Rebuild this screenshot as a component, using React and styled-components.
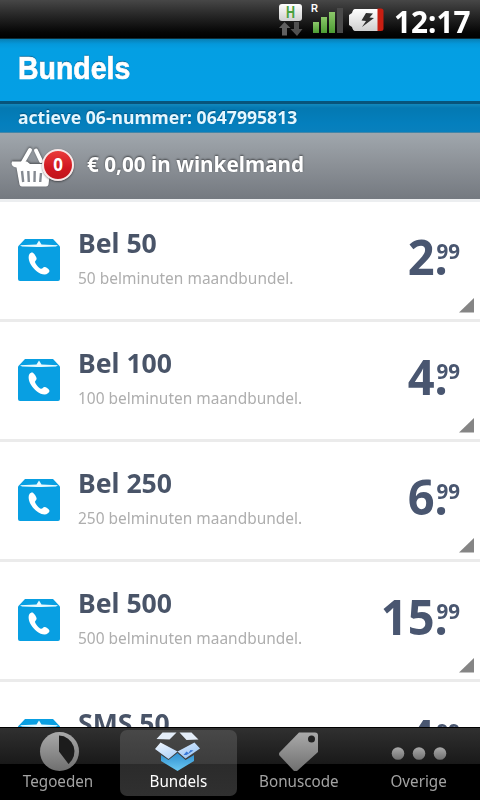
import React from "react";
import styled, { createGlobalStyle } from "styled-components";

const Global = createGlobalStyle`
  * { box-sizing: border-box; }
  body { margin: 0; background: #fff; overflow: hidden; }
`;

const Screen = styled.div`
  width: 480px;
  height: 800px;
  display: flex;
  flex-direction: column;
  overflow: hidden;
  background: #fff;
  font-family: "Noto Sans", sans-serif;
`;

const Label = styled.span`
  display: block;
  flex: none;
  white-space: pre;
  width: max-content;
  transform: scaleX(${(p) => p.$fit || 1});
  transform-origin: ${(p) => p.$origin || "left"} center;
`;

const StatusBar = styled.div`
  height: 39px;
  flex: none;
  display: flex;
  justify-content: flex-end;
  background: linear-gradient(#474747, #2b2b2b 35%, #050505 85%, #000);
  border-bottom: 1px solid #0c2c38;
`;

const StatusIcons = styled.svg`
  width: 110px;
  height: 38px;
  flex: none;
  margin-right: 9px;
`;

const Clock = styled.div`
  width: 86px;
  font-size: 31px;
  font-weight: 700;
  line-height: 42px;
  color: #fff;
`;

const Header = styled.div`
  height: 65px;
  flex: none;
  padding: 9px 18px 0;
  background: linear-gradient(#087fb4, #0498db 5px, #049fe3 10px, #049fe5);
  border-bottom: 3px solid #07557c;
  font-family: "Liberation Sans", sans-serif;
  font-size: 32px;
  font-weight: 700;
  line-height: 40px;
  color: #fff;
  -webkit-text-stroke: 0.7px #fff;
  text-shadow: 0 -1px 1px rgba(0, 40, 70, 0.6);
`;

const NumberBar = styled.div`
  height: 29px;
  flex: none;
  padding: 1px 18px 0;
  background: linear-gradient(#1289bd, #0479b2 4px, #047fbd 70%, #0880bd);
  border-bottom: 1px solid #4386a8;
  font-size: 17px;
  font-weight: 700;
  line-height: 25px;
  color: #e4f7ff;
  text-shadow: 0 -1px 1px rgba(0, 40, 70, 0.5);
`;

const CartBar = styled.div`
  height: 66px;
  flex: none;
  display: flex;
  padding-left: 10px;
  background: linear-gradient(#a0a7ad, #8d9298 45%, #747980);
`;

const CartIcon = styled.div`
  position: relative;
  width: 77px;
  flex: none;
`;

const Basket = styled.svg`
  display: block;
  width: 66px;
  height: 66px;
`;

const Badge = styled.span`
  position: absolute;
  left: 32px;
  top: 16px;
  width: 32px;
  height: 32px;
  border: 2.5px solid #f7e9e9;
  border-radius: 50%;
  background: linear-gradient(#ea3b3b, #d01820 60%, #c0141c);
  color: #fff;
  font-size: 17px;
  font-weight: 700;
  line-height: 28px;
  text-align: center;
  box-shadow: 0 1px 2px rgba(0, 0, 0, 0.45);
`;

const CartText = styled.div`
  padding-top: 17px;
  font-size: 21px;
  font-weight: 700;
  line-height: 28px;
  color: #fff;
  text-shadow: 0 -1px 2px rgba(0, 0, 0, 0.55);
`;

const List = styled.div`
  flex: 1;
  min-height: 0;
  overflow: hidden;
  border-top: 3px solid #eceef0;
`;

const Row = styled.div`
  height: 120px;
  display: flex;
  padding-left: 18px;
  border-bottom: 3px solid #ebebeb;
`;

const BoxIcon = styled.svg`
  width: 42px;
  height: 42px;
  flex: none;
  margin-top: 37px;
`;

const Info = styled.div`
  flex: 1;
  padding: 21px 0 0 18px;
`;

const Name = styled.div`
  font-size: 27px;
  font-weight: 700;
  line-height: 40px;
  color: #495468;
`;

const Desc = styled.div`
  font-size: 16px;
  line-height: 26px;
  margin-top: 2px;
  color: #aeaeae;
`;

const Side = styled.div`
  width: 130px;
  flex: none;
  display: flex;
  flex-direction: column;
  align-items: flex-end;
`;

const Price = styled.div`
  display: flex;
  justify-content: flex-end;
  height: 96px;
  padding: 24px 20px 0 0;
  color: #495670;
  font-weight: 700;
`;

const Whole = styled.div`
  font-size: 49px;
  line-height: 60px;
`;

const Cents = styled.div`
  margin: 10px 0 0 -12px;
  font-size: 21px;
  line-height: 30px;
`;

const Corner = styled.svg`
  width: 16px;
  height: 15px;
  margin-right: 5px;
`;

const TabBar = styled.div`
  height: 73px;
  flex: none;
  display: flex;
  padding-top: 3px;
  background: linear-gradient(#000 1px, #303030 1px, #191919 37px, #000 37px);
`;

const Tab = styled.div`
  width: 117px;
  height: 66px;
  flex: none;
  margin-right: 3px;
  display: flex;
  flex-direction: column;
  align-items: center;
  border-radius: 7px;
  background: ${(p) => (p.$active ? "linear-gradient(#484848, #3c3c3c 34px, #2b2b2b 34px, #303030)" : "none")};
  color: ${(p) => (p.$active ? "#fff" : "#a3a3a3")};
  font-size: 16px;
  line-height: 22px;
`;

const TabIcon = styled.svg`
  width: 60px;
  height: 41px;
  flex: none;
  margin-bottom: -1px;
`;

const rows = [
  { name: "Bel 50", desc: "50 belminuten maandbundel.", whole: "2." },
  { name: "Bel 100", desc: "100 belminuten maandbundel.", whole: "4." },
  { name: "Bel 250", desc: "250 belminuten maandbundel.", whole: "6." },
  { name: "Bel 500", desc: "500 belminuten maandbundel.", whole: "15." },
  { name: "SMS 50", desc: "50 sms maandbundel.", whole: "4.", sms: true },
];

function PackageIcon({ sms }) {
  return (
    <BoxIcon viewBox="0 0 42 42">
      <path d="M7 0H35L42 7.500V40Q42 42 40 42H2Q0 42 0 40V7.500Z" fill="#089fe2" />
      <path d="M2 6.200L18.500 5.500L21 1.500L23.500 5.500L40 6.200L38 7.400L23 8H19L4 7.400Z" fill="#e9faff" />
      {!sms && (
        <path
          d="M11.500 15C10 17 10.500 21.500 12.800 25.500C16 31 21.500 35.300 26.500 35.500C29 35.500 31.300 33.500 31.500 32C31.500 30.500 28.300 28 26.500 28C25 28.200 24.500 30 23 29.800C20.800 29 17.700 25.500 17 23C16.800 21.800 18.700 21.200 18.600 19.500C18.500 18 16 14 14.400 13.600C13.300 13.500 12.200 14.200 11.500 15Z"
          fill="#fff"
        />
      )}
    </BoxIcon>
  );
}

function BasketIcon() {
  return (
    <Basket viewBox="10 133 66 66">
      <g style={{ filter: "drop-shadow(0 -1px 1px rgba(0,0,0,.45))" }}>
        <path d="M22 164L30 150M36 150.500L41 161" stroke="#fff" strokeWidth="4" strokeLinecap="round" />
        <path d="M12 161.500H27L30 164H51L48.500 184.500Q48 186.500 46 186.500H22Q20 186.500 19.500 184.500L16.500 167.500Q12 167 11.500 163.500Z" fill="#fff" />
      </g>
      <path d="M22 171L23.200 182M28.300 171L28.800 182M34.700 171L34.500 182M41 173L40.200 182" stroke="#858a91" strokeWidth="2.400" />
    </Basket>
  );
}

function StatusGlyphs() {
  return (
    <StatusIcons viewBox="275 0 110 38">
      <defs>
        <linearGradient id="sig" x2="0" y2="1">
          <stop stopColor="#8cc86a" />
          <stop offset="1" stopColor="#4c9c33" />
        </linearGradient>
        <linearGradient id="bat" x2="0" y2="1">
          <stop stopColor="#fff" />
          <stop offset="1" stopColor="#cfcfcf" />
        </linearGradient>
      </defs>
      <rect x="279" y="4" width="23" height="17" rx="3" fill="url(#bat)" />
      <text x="290.5" y="18" textAnchor="middle" fontSize="16" fontWeight="700" fontFamily="Liberation Sans" fill="#49a03c" textLength="9" lengthAdjust="spacingAndGlyphs">H</text>
      <path d="M284.5 22L290.5 28H287V35.5H282V28H279Z" fill="#606060" />
      <path d="M294 22H299V29H302.5L297 36L290.5 29H294Z" fill="#505050" />
      <text x="311" y="12" fontSize="11" fontWeight="700" fontFamily="Liberation Sans" fill="#fff" textLength="7" lengthAdjust="spacingAndGlyphs">R</text>
      <rect x="313" y="22" width="6" height="11" fill="url(#sig)" />
      <rect x="321" y="17" width="6" height="16" fill="url(#sig)" />
      <rect x="329" y="12" width="6" height="21" fill="url(#sig)" />
      <rect x="337" y="8" width="6" height="25" fill="#4a4a4a" />
      <path d="M355 9H379V31H355Q353 31 352 27L349 25V15L352 13Q353 9 355 9Z" fill="url(#bat)" />
      <path d="M377.5 8.500H381Q383.500 8.500 383.500 11V28.500Q383.500 31 381 31H377.500Z" fill="#c81e12" />
      <path d="M366 13L373 13.500L369.500 17.500L374 18L362 27L366 21L361.500 20.500Z" fill="#303030" />
    </StatusIcons>
  );
}

const Gray = ({ id }) => (
  <linearGradient id={id} x2="0" y2="1">
    <stop stopColor="#aaa" />
    <stop offset="1" stopColor="#6f6f6f" />
  </linearGradient>
);

function App() {
  return (
    <>
      <Global />
      <Screen>
        <StatusBar>
          <StatusGlyphs />
          <Clock><Label $fit={0.96}>12:17</Label></Clock>
        </StatusBar>
        <Header><Label $fit={0.89}>Bundels</Label></Header>
        <NumberBar><Label $fit={1.035}>actieve 06-nummer: 0647995813</Label></NumberBar>
        <CartBar>
          <CartIcon>
            <BasketIcon />
            <Badge>0</Badge>
          </CartIcon>
          <CartText><Label $fit={0.987}>€ 0,00 in winkelmand</Label></CartText>
        </CartBar>
        <List>
          {rows.map((r) => (
            <Row key={r.name}>
              <PackageIcon sms={r.sms} />
              <Info>
                <Name><Label $fit={0.985}>{r.name}</Label></Name>
                <Desc><Label $fit={0.967}>{r.desc}</Label></Desc>
              </Info>
              <Side>
                <Price>
                  <Whole><Label $fit={0.96} $origin="right">{r.whole}</Label></Whole>
                  <Cents><Label $fit={0.98} $origin="right">99</Label></Cents>
                </Price>
                <Corner viewBox="0 0 16 15"><path d="M15 0V14.500H0Z" fill="#858585" /></Corner>
              </Side>
            </Row>
          ))}
        </List>
        <TabBar>
          <Tab>
            <TabIcon viewBox="29.5 730 60 41">
              <defs><Gray id="g1" /></defs>
              <circle cx="60" cy="751.500" r="19.500" fill="url(#g1)" />
              <path d="M59.500 735.500A16 16 0 0 1 69 764L59.500 751.500Z" fill="#1c1c1c" />
            </TabIcon>
            <Label $fit={0.95} $origin="center">Tegoeden</Label>
          </Tab>
          <Tab $active>
            <TabIcon viewBox="148.5 730 60 41">
              <defs>
                <linearGradient id="b1" x2="1" y2="1">
                  <stop stopColor="#f2f7ff" />
                  <stop offset="1" stopColor="#8fc0f4" />
                </linearGradient>
                <linearGradient id="b2" x2="0" y2="1">
                  <stop stopColor="#2e8fd0" />
                  <stop offset="1" stopColor="#6cc8f2" />
                </linearGradient>
              </defs>
              <path d="M160.500 755L168 760L177 753L185 760L193.500 755V761L177 771L160.500 761Z" fill="url(#b2)" />
              <path d="M162 732.500H176L169 739.500L156 739ZM179 732.500H191L198 739.500L186 740Z" fill="#e4edf8" />
              <path d="M160 742.500L177 751.500L168 759L154.500 749ZM194 742.500L199.500 748.500L185 758.500L177 751.500Z" fill="url(#b1)" />
              <path d="M183 755L186 751.500L188 753L190 750L193 750.500L186 755Z" fill="#3979d8" />
            </TabIcon>
            <Label $fit={0.95} $origin="center">Bundels</Label>
          </Tab>
          <Tab>
            <TabIcon viewBox="269 730 60 41">
              <defs><Gray id="g2" /></defs>
              <path d="M299 732.500H315Q318 732.500 318 735.500V752L297 771Q295.500 772 294 771L279.500 755.500Q278.500 754 279.500 752.500Z" fill="url(#g2)" />
              <circle cx="311.500" cy="739" r="3.500" fill="#222" />
            </TabIcon>
            <Label $fit={0.95} $origin="center">Bonuscode</Label>
          </Tab>
          <Tab>
            <TabIcon viewBox="388.500 730 60 41">
              <defs><Gray id="g3" /></defs>
              <circle cx="397.500" cy="753.500" r="6.300" fill="url(#g3)" />
              <circle cx="418.500" cy="753.500" r="6.300" fill="url(#g3)" />
              <circle cx="439.500" cy="753.500" r="6.300" fill="url(#g3)" />
            </TabIcon>
            <Label $fit={0.95} $origin="center">Overige</Label>
          </Tab>
        </TabBar>
      </Screen>
    </>
  );
}

export default App;
